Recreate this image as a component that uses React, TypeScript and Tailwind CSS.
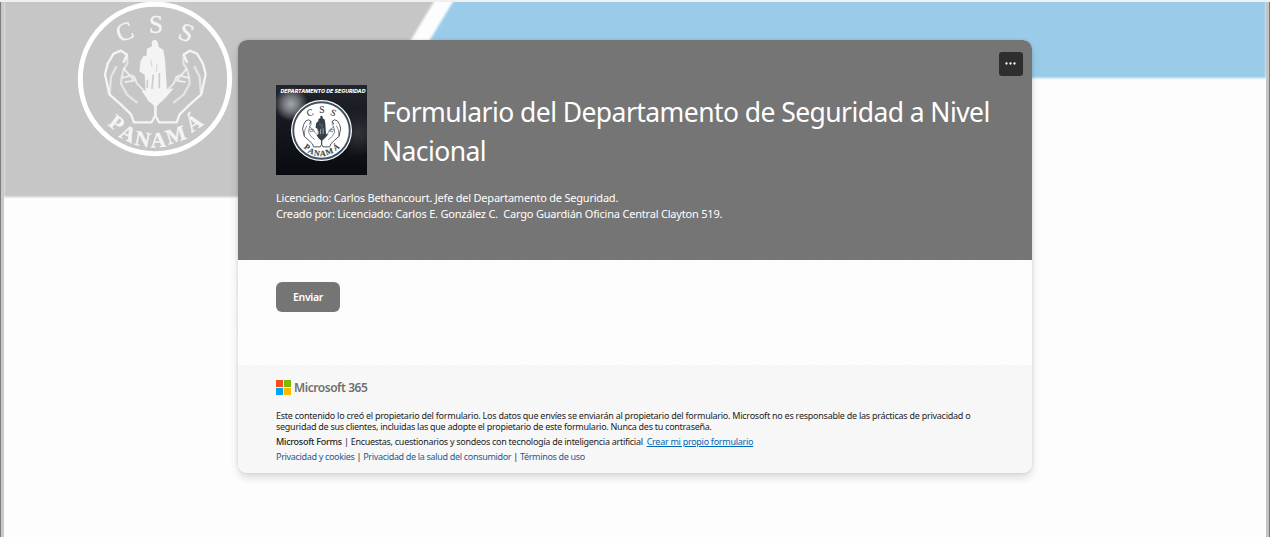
import React from "react";

type SealProps = { ink: string; ring: string; fill: string; gap: string; className?: string };

function Seal({ ink, ring, fill, gap, className }: SealProps) {
  const letters: [string, number, number, number, number][] = [
    ["C", 381, 118, -20, 76],
    ["S", 467, 97, 0, 76],
    ["S", 549, 120, 22, 76],
    ["P", 336, 385, 38, 64],
    ["A", 374, 419, 26, 64],
    ["N", 423, 437, 11, 64],
    ["A", 475, 440, -3, 64],
    ["M", 533, 424, -18, 64],
    ["Á", 593, 385, -34, 64],
  ];
  return (
    <svg viewBox="230 2 468 468" className={className} aria-hidden="true">
      <circle cx="464" cy="236" r="224" fill={fill} stroke={ring} strokeWidth="15" />
      <g fill={ink} fontFamily="Liberation Serif, serif" textAnchor="middle" stroke={ink} strokeWidth="1">
        {letters.map(([c, x, y, r, s], i) => (
          <text key={i} x={x} y={y} fontSize={s} fontWeight={i > 2 ? 700 : 400} transform={`rotate(${r} ${x} ${y})`}>
            {c}
          </text>
        ))}
      </g>
      {[0, 1].map((k) => (
        <g
          key={k}
          transform={k ? "translate(930 0) scale(-1 1)" : undefined}
          fill="none"
          stroke={ink}
          strokeLinejoin="round"
          strokeLinecap="round"
        >
          <path d="M465 320V345L454 366H401L392 342L362 313L327 282L314 222L322 190L340 160L362 151L380 163L370 185" strokeWidth="7" />
          <path d="M328 280L332 230L347 200M380 163L381 190L371 205L365 225L362 250L380 283L409 306" strokeWidth="7" opacity=".65" />
          <path d="M371 205L385 222L402 230L410 250L430 270L447 302M366 232L390 226L400 241L376 245" strokeWidth="6" opacity=".8" />
        </g>
      ))}
      <path
        fill={ink}
        d="M454 125Q463 112 472 125L475 140L489 148L494 178L497 225L500 268L520 264L498 290L484 302L466 322L444 300L424 272L436 272L433 224L417 213L421 181L430 167L438 167L440 145L455 138Z"
      />
      <path d="M441 238V262M459 222L455 266M477 218V264" stroke={gap} strokeWidth="5" opacity=".85" />
      <path d="M451 178L455 200M470 190L468 215" stroke={gap} strokeWidth="4" opacity=".5" />
    </svg>
  );
}

function Backdrop() {
  return (
    <div className="absolute inset-0 overflow-hidden bg-[#fdfdfd]">
      <svg width="1270" height="537" className="block" aria-hidden="true">
        <defs>
          <filter id="soft" x="-5%" y="-5%" width="110%" height="110%">
            <feGaussianBlur stdDeviation="0.8" />
          </filter>
        </defs>
        <g filter="url(#soft)">
          <path d="M4 -5H438L316 197H4Z" fill="#c6c6c6" />
          <path d="M457 -5H1266V78H407Z" fill="#9acce9" />
        </g>
        <path d="M1 0H4V537H1Z" fill="#c9c9c9" />
        <path d="M0 0H1V537H0Z" fill="#7c7c7c" />
        <path d="M1266 0H1269V537H1266Z" fill="#c4c4c4" />
        <path d="M1269 0H1270V537H1269Z" fill="#777" />
      </svg>
      <Seal ink="#f4f4f4" ring="#fff" fill="none" gap="#c6c6c6" className="absolute left-[76.7px] top-[0.7px] size-[156px] blur-[0.5px]" />
      <div className="absolute inset-x-0 top-0 h-0.5 bg-[#f0f0f0]" />
    </div>
  );
}

function DepartmentLogo() {
  return (
    <div className="relative h-[90px] w-[91px] shrink-0 overflow-hidden bg-[radial-gradient(circle_at_15px_19px,#a2a5a8_0px,#777b80_7px,transparent_17px),radial-gradient(circle_at_82px_48px,#303439,transparent_24px),linear-gradient(#22262c,#14181e_45%,#080b10)]">
      <svg viewBox="0 0 91 12" className="absolute inset-x-0 top-0 h-3 w-[91px]">
        <text x="4.5" y="8.2" textLength="85" lengthAdjust="spacingAndGlyphs" fill="#fff" fontFamily="Inter, sans-serif" fontStyle="italic" fontWeight="800" fontSize="5.2">
          DEPARTAMENTO DE SEGURIDAD
        </text>
      </svg>
      <div className="absolute left-[15px] top-[15px] size-[61px] rounded-full bg-white" />
      <Seal ink="#34414b" ring="#40505c" fill="#ffffff" gap="#ffffff" className="absolute left-4 top-4 size-[59px]" />
    </div>
  );
}

export default function App() {
  return (
    <div className="relative h-[537px] w-[1270px] overflow-hidden font-['Noto_Sans',sans-serif]">
      <Backdrop />
      <main className="relative mx-auto mt-10 flex h-[433px] w-[794px] flex-col overflow-hidden rounded-[9px] bg-[#fdfdfd] shadow-[0_5px_8px_rgba(0,0,0,0.13),0_0_3px_rgba(0,0,0,0.12)]">
        <header className="relative h-[220px] shrink-0 bg-[#757575] px-[38px] pt-[45px] text-white">
          <button aria-label="Más opciones" className="absolute right-[9px] top-3 flex size-6 items-center justify-center rounded-[3px] bg-[#2e2e2e]">
            <svg width="12" height="4" viewBox="0 0 12 4" fill="#fff" aria-hidden="true">
              <circle cx="1.5" cy="1.5" r="1.15" />
              <circle cx="5.5" cy="1.5" r="1.15" />
              <circle cx="9.5" cy="1.5" r="1.15" />
            </svg>
          </button>
          <div className="flex items-center gap-[15px]">
            <DepartmentLogo />
            <h1 className="whitespace-nowrap pt-1 text-[26.5px] leading-[39px] tracking-[-0.57px]">
              <span className="block">Formulario del Departamento de Seguridad a Nivel</span>
              <span className="block">Nacional</span>
            </h1>
          </div>
          <p className="mt-[15px] whitespace-pre text-[11px] leading-4 tracking-[-0.2px]">
            <span className="block tracking-[-0.22px]">Licenciado: Carlos Bethancourt. Jefe del Departamento de Seguridad.</span>
            <span className="block">Creado por: Licenciado: Carlos E. González C.  Cargo Guardián Oficina Central Clayton 519.</span>
          </p>
        </header>
        <section className="h-[105px] shrink-0 bg-[repeating-linear-gradient(12deg,#fdfdfd_0px,#fdfdfd_3px,#fafafa_4px)] px-[38px] pt-[22px]">
          <button className="flex h-[30px] w-16 items-center justify-center rounded-md bg-[#757575] pt-0.5 text-[10.5px] font-semibold tracking-[-0.35px] text-white">
            <span>Enviar</span>
          </button>
        </section>
        <footer className="flex-1 whitespace-nowrap bg-[#f7f7f7] px-[38px] pt-[14px] text-[9px] leading-[11px] tracking-[-0.25px] text-[#242424]">
          <div className="flex h-4 items-center gap-[3px]">
            <svg width="15" height="15" viewBox="0 0 15 15" aria-hidden="true">
              <path fill="#f25022" d="M0 0h7v7H0z" />
              <path fill="#7fba00" d="M8 0h7v7H8z" />
              <path fill="#00a4ef" d="M0 8h7v7H0z" />
              <path fill="#ffb900" d="M8 8h7v7H8z" />
            </svg>
            <span className="text-[12px] font-semibold tracking-[-0.45px] text-[#706f70]">Microsoft 365</span>
          </div>
          <p className="mt-[15px]">
            <span className="block">Este contenido lo creó el propietario del formulario. Los datos que envíes se enviarán al propietario del formulario. Microsoft no es responsable de las prácticas de privacidad o</span>
            <span className="block tracking-[-0.27px]">seguridad de sus clientes, incluidas las que adopte el propietario de este formulario. Nunca des tu contraseña.</span>
          </p>
          <p className="mt-1 tracking-[-0.28px]">
            <span className="font-medium">Microsoft Forms</span> | <span>Encuestas, cuestionarios y sondeos con tecnología de inteligencia artificial</span>
            <a href="#" className="ml-1 text-[#0067b8] underline">Crear mi propio formulario</a>
          </p>
          <p className="mt-1 tracking-[-0.32px]">
            <a href="#" className="text-[#1b5c92]">Privacidad y cookies</a> | <a href="#" className="text-[#1b5c92]">Privacidad de la salud del consumidor</a> | <a href="#" className="text-[#1b5c92]">Términos de uso</a>
          </p>
        </footer>
      </main>
    </div>
  );
}
